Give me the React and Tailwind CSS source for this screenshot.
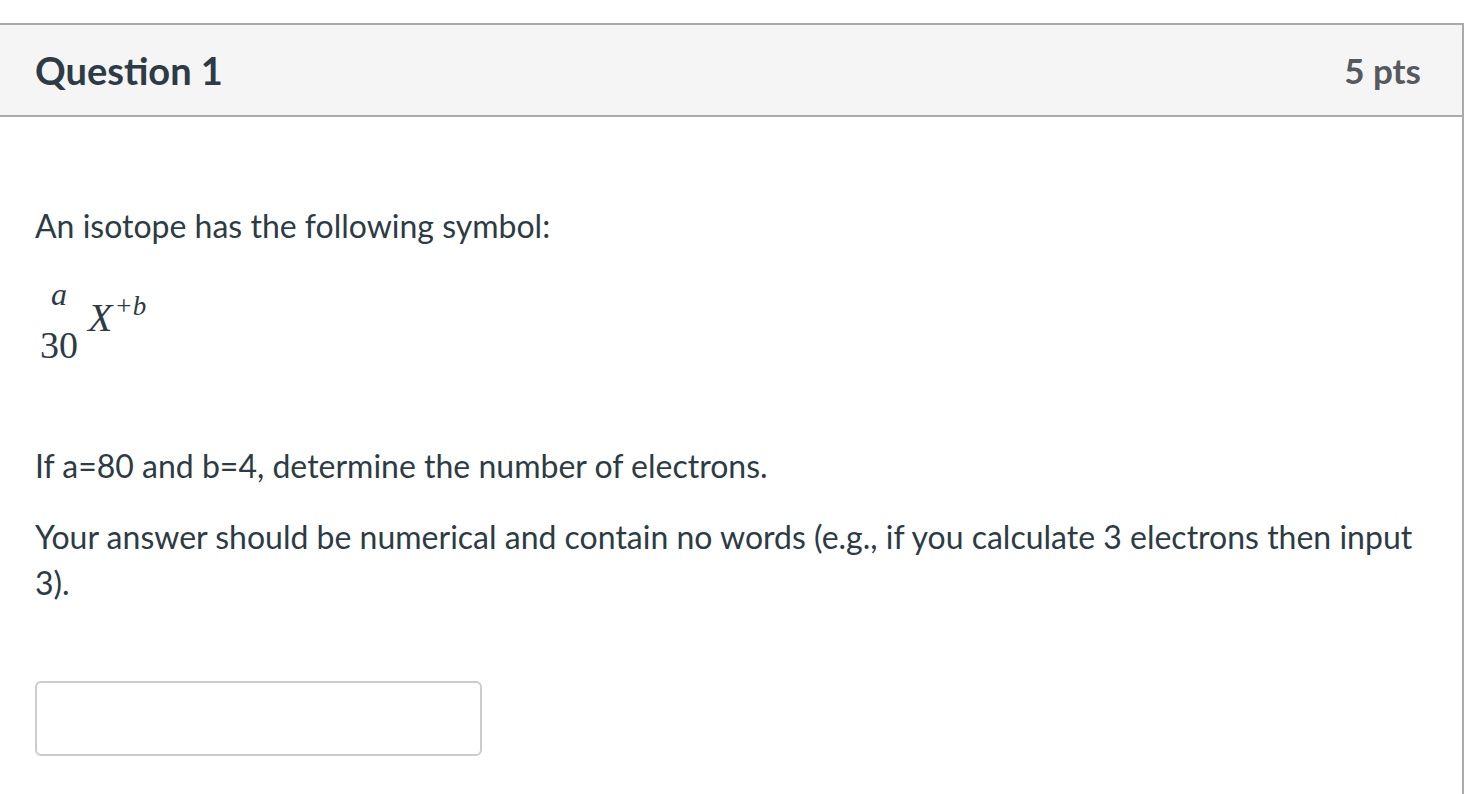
export default function App() {
  return (
    <div className="h-[794px] overflow-hidden bg-white pt-[23px] font-['Lato',sans-serif] text-[#2d3b45]">
      <div className="-ml-[2px] min-h-[820px] w-[1466px] border-2 border-[#aaaaaa] bg-white">
        <div className="flex h-[92px] items-center justify-between border-b-2 border-[#aaaaaa] bg-[#f5f5f5] pl-[35px] pr-[41px]">
          <h2 className="text-[38px] font-bold">Question 1</h2>
          <div className="text-[35px] font-bold text-[#555a5e]">5 pts</div>
        </div>
        <div className="pl-[35px] pr-[40px] pt-[86px] text-[32px] leading-[46px]">
          <p>An isotope has the following symbol:</p>
          <div className="mt-[29px] flex items-start font-['Liberation_Serif',serif] text-[#2d3b45]">
            <div className="ml-[5px] flex flex-col items-center">
              <span className="text-[32px] italic leading-[32px]">a</span>
              <span className="mt-[16px] text-[38px] leading-[38px]">30</span>
            </div>
            <span className="ml-[10px] mt-[20px] text-[40px] italic leading-[40px]">X</span>
            <span className="ml-[2px] mt-[15px] text-[27px] italic leading-[27px]">+b</span>
          </div>
          <p className="mt-[79px]">If a=80 and b=4, determine the number of electrons.</p>
          <p className="mt-[25px]">
            Your answer should be numerical and contain no words (e.g., if you calculate 3 electrons then input 3).
          </p>
          <input
            type="text"
            aria-label="Answer"
            className="mt-[75px] h-[75px] w-[447px] rounded-[6px] border-2 border-[#cccccc] bg-white outline-none"
          />
        </div>
      </div>
    </div>
  );
}
